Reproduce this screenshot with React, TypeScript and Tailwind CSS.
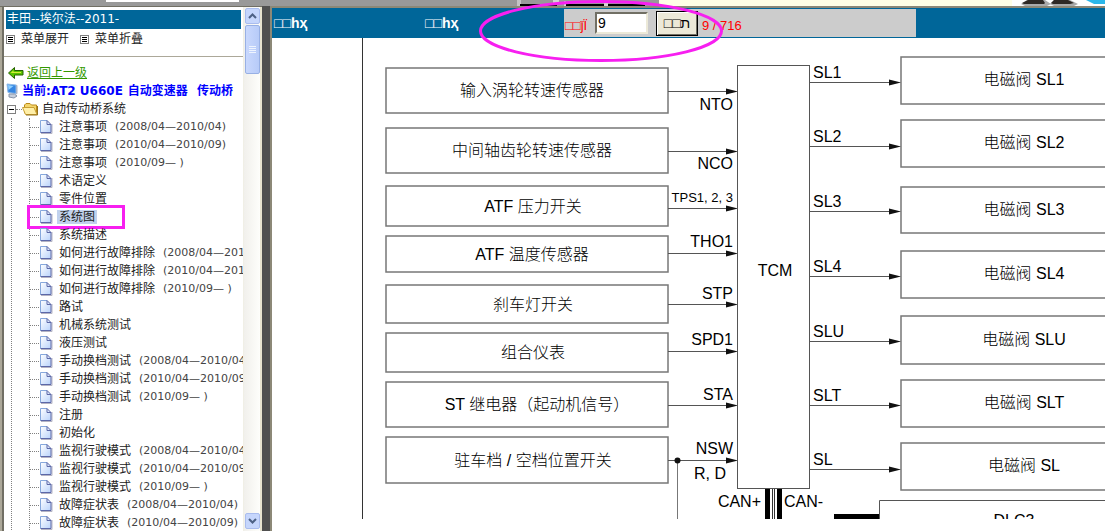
import React from "react";

type Topic = { name: string; range?: string; active?: boolean };

const topics: Topic[] = [
  { name: "注意事项", range: "(2008/04—2010/04)" },
  { name: "注意事项", range: "(2010/04—2010/09)" },
  { name: "注意事项", range: "(2010/09— )" },
  { name: "术语定义" },
  { name: "零件位置" },
  { name: "系统图", active: true },
  { name: "系统描述" },
  { name: "如何进行故障排除", range: "(2008/04—2010/04)" },
  { name: "如何进行故障排除", range: "(2010/04—2010/09)" },
  { name: "如何进行故障排除", range: "(2010/09— )" },
  { name: "路试" },
  { name: "机械系统测试" },
  { name: "液压测试" },
  { name: "手动换档测试", range: "(2008/04—2010/04)" },
  { name: "手动换档测试", range: "(2010/04—2010/09)" },
  { name: "手动换档测试", range: "(2010/09— )" },
  { name: "注册" },
  { name: "初始化" },
  { name: "监视行驶模式", range: "(2008/04—2010/04)" },
  { name: "监视行驶模式", range: "(2010/04—2010/09)" },
  { name: "监视行驶模式", range: "(2010/09— )" },
  { name: "故障症状表", range: "(2008/04—2010/04)" },
  { name: "故障症状表", range: "(2010/04—2010/09)" },
];

const inputs = [
  { top: 68, bottom: 113, y: 91, name: "输入涡轮转速传感器", x: 532, signal: "NTO", sy: 110 },
  { top: 128, bottom: 173, y: 151, name: "中间轴齿轮转速传感器", x: 532, signal: "NCO", sy: 169 },
  { top: 186, bottom: 226, y: 208, name: "ATF 压力开关", x: 533, signal: "TPS1, 2, 3", sy: 202 },
  { top: 236, bottom: 272, y: 253, name: "ATF 温度传感器", x: 532, signal: "THO1", sy: 247 },
  { top: 285, bottom: 323, y: 304, name: "刹车灯开关", x: 533, signal: "STP", sy: 299 },
  { top: 333, bottom: 372, y: 351, name: "组合仪表", x: 533, signal: "SPD1", sy: 345 },
  { top: 382, bottom: 427, y: 405, name: "ST 继电器（起动机信号）", x: 537, signal: "STA", sy: 400 },
  { top: 437, bottom: 483, y: 460, name: "驻车档 / 空档位置开关", x: 533, signal: "NSW", sy: 454 },
];

const outputs = [
  { top: 57, bottom: 104, y: 82, signal: "SL1" },
  { top: 120, bottom: 167, y: 146, signal: "SL2" },
  { top: 187, bottom: 233, y: 211, signal: "SL3" },
  { top: 251, bottom: 298, y: 276, signal: "SL4" },
  { top: 316, bottom: 364, y: 341, signal: "SLU" },
  { top: 380, bottom: 427, y: 405, signal: "SLT" },
  { top: 443, bottom: 490, y: 469, signal: "SL" },
];

function TopStrip() {
  return (
    <div className="h-[6px] w-full shrink-0 overflow-hidden bg-[#999999]">
      <svg width="1105" height="6" aria-hidden="true">
        <rect x="106" y="0" width="133" height="2" fill="#fff" />
        <rect x="517" y="0" width="4" height="6" fill="#c4c4c4" />
        <path d="M520 4h37v2h-37zM566 4h38v2h-38zM608 4h37v2h-37z" fill="#000" />
        <path d="M553 0h6v4h-6zM564 1h2v5h-2zM604 1h4v5h-4z" fill="#d4d4d4" />
        <rect x="659" y="0" width="353" height="6" fill="#ffffe6" />
        <rect x="1012" y="0" width="93" height="6" fill="#fff" />
        <path d="M1021 4l6-4h18l6 4-4 2h-22zM1050 4l4-4h16l8 4-4 2h-20z" fill="#aaa" />
        <path d="M1022 3l6-3h15l2 3-1 1h-20zM1051 3l3-3h14l6 3-4 1h-17z" fill="#2e2925" />
        <path d="M1086 0h19v4h-11z" fill="#2bb7ea" />
      </svg>
    </div>
  );
}

function ListIcon() {
  return (
    <svg width="9" height="9" aria-hidden="true" className="shrink-0">
      <rect x="0.5" y="0.5" width="8" height="8" fill="#fff" stroke="#808080" />
      <path d="M2 2.5h5M2 4.5h5M2 6.5h5" stroke="#000" />
    </svg>
  );
}

function PageIcon() {
  return (
    <svg width="14" height="16" aria-hidden="true" className="shrink-0">
      <defs>
        <linearGradient id="sheet" x1="0" y1="0" x2="1" y2="1">
          <stop offset="0" stopColor="#ffffff" />
          <stop offset="1" stopColor="#b9d3fb" />
        </linearGradient>
      </defs>
      <path d="M2 14.500h11V5" fill="none" stroke="#b4b4c4" />
      <path d="M1.500 1.500h7l3.500 4v8h-10.500z" fill="url(#sheet)" />
      <path d="M1.500 13.500v-12h6.500" fill="none" stroke="#86a8dc" />
      <path d="M1.500 13.500h10.500v-8l-4-4v4h4" fill="none" stroke="#5c68a8" />
    </svg>
  );
}

function FolderIcon() {
  return (
    <svg width="17" height="14" aria-hidden="true" className="shrink-0">
      <path d="M2.500 11V3l1.500-1.500h4l1.500 1.500h5V11z" fill="#f4d56b" stroke="#bb8a19" />
      <path d="M0.500 5.500h11.500l3 7H3.500z" fill="#ffefa8" stroke="#c9a034" />
      <path d="M4 13h11.500V4" fill="none" stroke="#96731c" />
    </svg>
  );
}

function ComputerIcon() {
  return (
    <svg width="13" height="16" aria-hidden="true" className="shrink-0">
      <path d="M1 1l9 1v8.500l-8-1z" fill="#3586e2" stroke="#8ebbe9" />
      <path d="M2 2l5.500 1-5 4z" fill="#8fd0ff" />
      <path d="M10 1.500l1.500 1v8l-1.500 1z" fill="#a9b4c9" />
      <path d="M3 11h5.500l2.500 2-3 2-5-1z" fill="#c6cfdc" stroke="#8793a8" />
    </svg>
  );
}

function Chevron({ down = false }: { down?: boolean }) {
  return (
    <svg width="9" height="6" aria-hidden="true">
      <path d={down ? "M1 1l3.500 3.500L8 1" : "M1 5l3.500-3.500L8 5"} fill="none" stroke="#4d6185" strokeWidth="2" />
    </svg>
  );
}

function Sidebar() {
  return (
    <aside className="flex w-[262px] shrink-0 overflow-hidden border-r-2 border-[#e8e4d0] bg-white">
      <div className="w-1 shrink-0 border-l-2 border-r-2 border-l-[#aca899] border-r-[#716f64]" />
      <nav className="w-[239px] shrink-0 overflow-hidden whitespace-nowrap pt-[3px] text-[12px] leading-[18px] text-[#222222]">
        <h1 className="ml-[2px] mr-[2px] h-[19px] bg-[#006699] px-px text-white">丰田--埃尔法--2011-</h1>
        <div className="flex h-7 items-center gap-[11px] border-b border-[#aca899] pb-[7px] pl-[2px]">
          <button type="button" className="flex items-center gap-[6px]">
            <ListIcon />菜单展开
          </button>
          <button type="button" className="flex items-center gap-[6px]">
            <ListIcon />菜单折叠
          </button>
        </div>
        <div className="mt-[7px] flex h-[18px] items-center gap-[3px] pl-1">
          <svg width="16" height="12" aria-hidden="true" className="shrink-0">
            <path d="M0.500 6l6-5.500v3h8.500v4.500H6.500v3.500z" fill="#58c400" stroke="#255f00" />
            <path d="M2.500 6l3-2.500v1.500H13v1H3z" fill="#d6ec37" />
          </svg>
          <a href="#up" className="text-[#339900] underline">返回上一级</a>
        </div>
        <div className="flex h-[18px] items-center gap-[3px] pl-[2px] font-bold text-[#0000ff]">
          <ComputerIcon />
          <span className="flex gap-[5px]">
            <span>当前:AT2 U660E</span>
            <span>自动变速器</span>
            <span className="pl-1">传动桥</span>
          </span>
        </div>
        <div className="flex h-[18px] items-center pl-[3px]">
          <button type="button" aria-label="折叠" className="flex h-[9px] w-[9px] items-center justify-center border border-[#808080] bg-white">
            <span className="h-px w-[5px] bg-black" />
          </button>
          <span className="w-[6px] border-t border-dotted border-[#808080]" />
          <FolderIcon />
          <span className="pl-[3px]">自动传动桥系统</span>
        </div>
        <div className="ml-[7px] border-l border-dotted border-[#808080]">
          <ul className="ml-[17px] border-l border-dotted border-[#808080]">
            {topics.map((t, i) => (
              <li key={i} className="relative flex h-[18px] items-center">
                <span className="w-[9px] shrink-0 border-t border-dotted border-[#808080]" />
                <PageIcon />
                <a href="#topic" className="ml-1 flex items-center">
                  <span className={t.active ? "h-[14px] bg-[#c1d2ee] px-[2px] leading-[14px]" : "px-[2px]"}>{t.name}</span>
                  {t.range && <span className="pl-[6px] text-[11px] text-[#444444]">{t.range}</span>}
                </a>
                {t.active && (
                  <span className="absolute -left-[3px] -top-[3px] h-6 w-[98px] border-[3px] border-[#f71ff0]" />
                )}
              </li>
            ))}
          </ul>
        </div>
      </nav>
      <div className="flex flex-1 flex-col items-center border-l border-[#f0efe6] bg-gradient-to-r from-[#f1f0ec] to-[#fefefb] pb-[2px] pt-[1px]">
        <button type="button" aria-label="向上" className="flex h-4 w-[15px] shrink-0 items-center justify-center rounded-[2px] border border-[#a9bcee] bg-[#c6d6fc]">
          <Chevron />
        </button>
        <div className="mt-px flex h-[49px] w-[15px] shrink-0 flex-col items-center justify-center gap-px rounded-[2px] border border-[#98b0e4] bg-gradient-to-r from-[#c9d8fd] to-[#b7cbf8]">
          <span className="h-px w-[7px] bg-[#eef4fe]" />
          <span className="h-px w-[7px] bg-[#eef4fe]" />
          <span className="h-px w-[7px] bg-[#eef4fe]" />
          <span className="h-px w-[7px] bg-[#eef4fe]" />
        </div>
        <div className="flex-1" />
        <button type="button" aria-label="向下" className="flex h-4 w-[15px] shrink-0 items-center justify-center rounded-[2px] border border-[#a9bcee] bg-[#c6d6fc]">
          <Chevron down />
        </button>
      </div>
    </aside>
  );
}

function Toolbar() {
  return (
    <div className="flex h-[30px] shrink-0 items-center bg-[#006699] font-['Liberation_Sans','DejaVu_Sans',sans-serif] text-[14px]">
      <a href="#prev" className="w-[151px] shrink-0 pl-[2px] font-bold text-white">□□һҳ</a>
      <a href="#next" className="w-[141px] shrink-0 pl-[2px] font-bold text-white">□□һҳ</a>
      <form className="flex h-7 w-[352px] shrink-0 items-center bg-[#cccccc] pl-px text-[13px] text-[#ff0000]" onSubmit={(e) => e.preventDefault()}>
        <label htmlFor="page" className="w-[30px] shrink-0 whitespace-nowrap pt-[6px]">□□ǰΪ</label>
        <input
          id="page"
          defaultValue="9"
          className="h-[22px] w-[53px] shrink-0 border-2 border-b-[#ece9d8] border-l-[#716f64] border-r-[#ece9d8] border-t-[#716f64] bg-white px-px text-[14px] text-black outline-none"
        />
        <button type="submit" className="ml-2 h-[25px] w-[42px] shrink-0 whitespace-nowrap border border-black bg-[#ece9d8] text-[14px] leading-none text-black shadow-[inset_1px_1px_0_#ffffff,inset_-1px_-1px_0_#716f64]">
          □□ת
        </button>
        <span className="ml-1 pt-[6px]">9 / 716</span>
      </form>
    </div>
  );
}

function Wire({ from, to, y }: { from: number; to: number; y: number }) {
  return (
    <g>
      <path d={`M${from} ${y + 0.5}H${to - 10}`} stroke="#555" />
      <path d={`M${to} ${y + 0.5}l-12 -3v6z`} fill="#111" />
    </g>
  );
}

function Diagram() {
  return (
    <svg
      width="833"
      height="481"
      viewBox="272 38 833 481"
      role="img"
      aria-label="TCM 系统图"
      className="block shrink-0 font-['Liberation_Sans','Noto_Sans_CJK_SC',sans-serif] text-[16px]"
    >
      <path d="M362.500 38V519" stroke="#333" />
      {inputs.map((b) => (
        <g key={b.signal}>
          <rect x="386" y={b.top} width="282" height={b.bottom - b.top} fill="#fff" stroke="#777" strokeWidth="1.500" />
          <text x={b.x} y={Math.floor((b.top + b.bottom) / 2) + 6} textAnchor="middle" className="font-light">{b.name}</text>
          <Wire from={668} to={738} y={b.y} />
          <text x="733" y={b.sy} textAnchor="end" className={b.signal.startsWith("TPS") ? "text-[13px]" : "text-[16px]"}>
            {b.signal}
          </text>
        </g>
      ))}
      <rect x="737.500" y="65.500" width="72" height="423" fill="none" stroke="#555" />
      <text x="775" y="276" textAnchor="middle">TCM</text>
      {outputs.map((b) => (
        <g key={b.signal}>
          <rect x="901" y={b.top} width="230" height={b.bottom - b.top} fill="#fff" stroke="#777" strokeWidth="1.500" />
          <text x="1024" y={Math.floor((b.top + b.bottom) / 2) + 5} textAnchor="middle" className="font-light">电磁阀 {b.signal}</text>
          <Wire from={810} to={901} y={b.y} />
          <text x="813" y={b.y - 4}>{b.signal}</text>
        </g>
      ))}
      <path d="M677.500 460V519" stroke="#777" />
      <circle cx="677.500" cy="460.500" r="3" fill="#111" />
      <text x="694" y="479">R, D</text>
      <text x="761" y="507" textAnchor="end">CAN+</text>
      <text x="784" y="507">CAN-</text>
      <path d="M765 489h5v30h-5zM777 489h5v30h-5z" fill="#000" />
      <path d="M772.500 489v30M774.500 489v30" stroke="#333" />
      <path d="M834 514h46v5h-46z" fill="#000" />
      <path d="M879.500 519V500.500H1105" fill="none" stroke="#555" />
      <text x="1014" y="526" textAnchor="middle">DLC3</text>
    </svg>
  );
}

export default function App() {
  return (
    <div className="relative flex h-screen flex-col overflow-hidden bg-white font-['DejaVu_Sans','Noto_Sans_CJK_SC',sans-serif]">
      <TopStrip />
      <div className="flex min-h-0 flex-1">
        <div className="flex shrink-0 border-t border-[#716f64]">
          <Sidebar />
        </div>
        <div className="w-2 shrink-0 bg-[#505050]" />
        <main className="flex min-w-0 flex-1 flex-col overflow-hidden border-l-2 border-t-2 border-[#8c8877]">
          <Toolbar />
          <Diagram />
        </main>
      </div>
      <svg width="246" height="64" aria-hidden="true" className="pointer-events-none absolute left-[478px] top-0">
        <ellipse cx="123" cy="31" rx="120.500" ry="29.500" fill="none" stroke="#f71ff0" strokeWidth="3" />
      </svg>
    </div>
  );
}
